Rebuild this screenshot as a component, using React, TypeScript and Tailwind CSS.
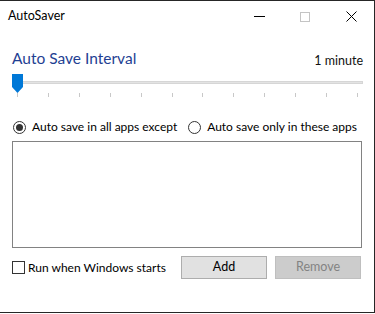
import React from "react";

const ticks = Array.from({ length: 12 }, (_, i) => i);

export default function App() {
  return (
    <div className="w-[375px] h-[314px] bg-white" style={{ fontFamily: 'Lato, "Noto Sans", sans-serif' }}>
      <div className="w-[375px] h-[313px] border-t border-r border-b border-[#262626] flex flex-col text-[12px] text-black">
        {/* title bar */}
        <div className="h-[31px] flex items-center pl-[8px] shrink-0">
          <span className="text-[12.5px] leading-none text-black">AutoSaver</span>
          <div className="ml-auto flex items-center h-full">
            <div className="w-[46px] h-full flex items-center justify-center">
              <div className="w-[11px] h-px bg-black" />
            </div>
            <div className="w-[46px] h-full flex items-center justify-center">
              <div className="w-[10px] h-[10px] border border-[#c4c4c4]" />
            </div>
            <div className="w-[46px] h-full flex items-center justify-center">
              <svg width="11" height="11" viewBox="0 0 11 11">
                <path d="M0.5 0.5 L10.5 10.5 M10.5 0.5 L0.5 10.5" stroke="#000" strokeWidth="1" />
              </svg>
            </div>
          </div>
        </div>

        <div className="flex flex-col pl-[12px] pr-[12px]">
          {/* header row */}
          <div className="flex items-end justify-between mt-[16px] h-[20px]">
            <span className="text-[15.5px] leading-[20px] text-[#1f3f93] whitespace-nowrap">Auto Save Interval</span>
            <span className="text-[12.5px] leading-[16px] mb-[-1px] mr-[-1px] whitespace-nowrap text-[#111]">1 minute</span>
          </div>

          {/* slider */}
          <div className="relative h-[26px] mt-[6px]">
            <div className="absolute left-0 right-[-1px] top-[7px] h-[3px] bg-[#e3e3e3] border border-[#d6d6d6]" />
            <svg className="absolute left-0 top-0" width="11" height="19" viewBox="0 0 11 19">
              <path d="M0 0 H11 V13 L5.5 19 L0 13 Z" fill="#0078d7" />
            </svg>
            {ticks.map((i) => (
              <div
                key={i}
                className="absolute top-[19px] w-px h-[4px] bg-[#c8c8c8]"
                style={{ left: 5 + i * 30.9 }}
              />
            ))}
          </div>

          {/* radio row */}
          <div className="flex items-center mt-[19px] h-[16px] whitespace-nowrap">
            <div className="w-[13px] h-[13px] rounded-full border border-[#333] flex items-center justify-center ml-[1px] shrink-0">
              <div className="w-[7px] h-[7px] rounded-full bg-[#333]" />
            </div>
            <span className="ml-[6px] text-[12px]">Auto save in all apps except</span>
            <div className="w-[13px] h-[13px] rounded-full border border-[#333] ml-[11px] shrink-0" />
            <span className="ml-[6px] text-[12px]">Auto save only in these apps</span>
          </div>

          {/* list */}
          <div className="mt-[6px] h-[107px] w-[350px] border border-[#828282] bg-white" />

          {/* bottom row */}
          <div className="flex items-center mt-[8px] h-[23px] whitespace-nowrap">
            <div className="w-[13px] h-[13px] border border-[#333] bg-white shrink-0" />
            <span className="ml-[3px] text-[12px]">Run when Windows starts</span>
            <button className="ml-auto w-[86px] h-[23px] bg-[#e1e1e1] border border-[#adadad] text-[12.5px] text-black">
              Add
            </button>
            <button className="ml-[8px] mr-[1px] w-[86px] h-[23px] bg-[#cccccc] border border-[#bfbfbf] text-[12.5px] text-[#838383]">
              Remove
            </button>
          </div>
        </div>
      </div>
    </div>
  );
}
